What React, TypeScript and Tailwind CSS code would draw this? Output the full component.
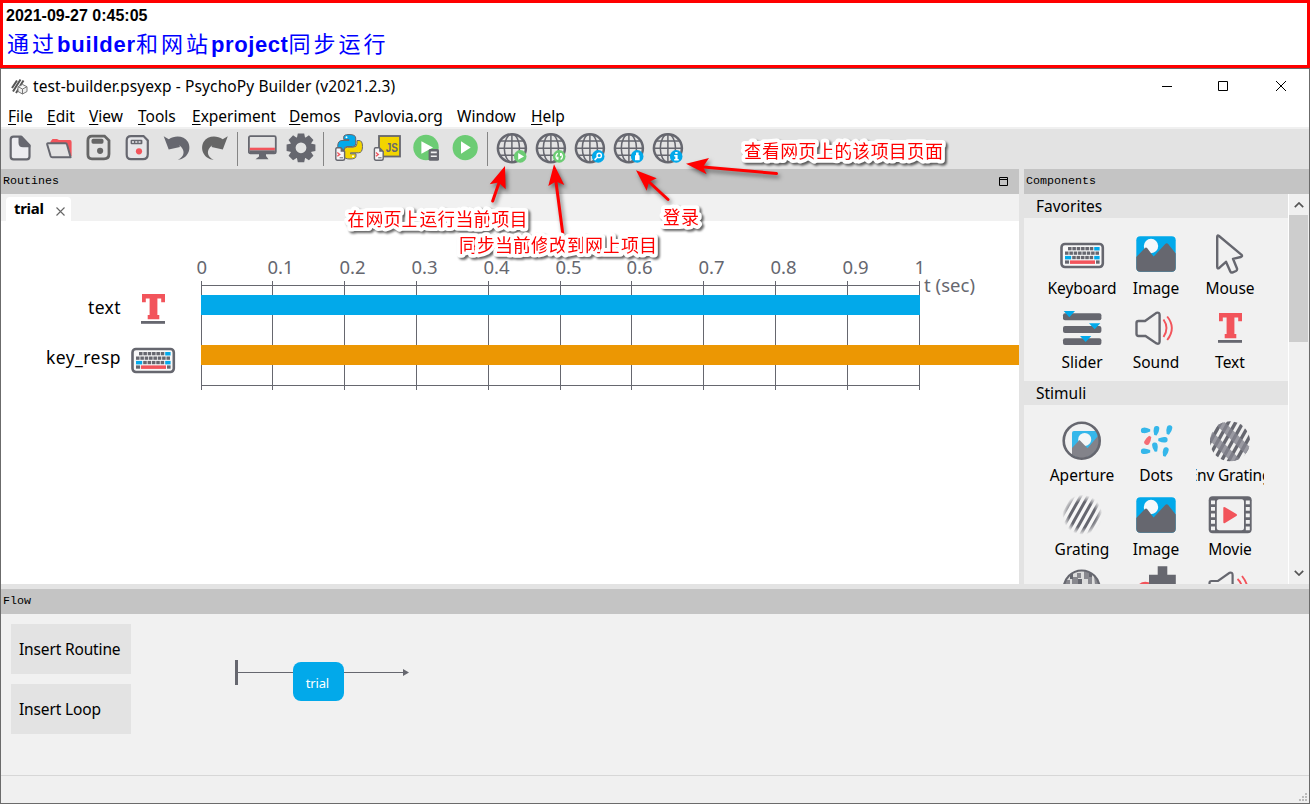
import React from "react";

const GREY = "#66676f";
const BLUE = "#02a9ea";
const RED = "#f2545b";
const GREEN = "#6ccc74";

function ToolIcon({ children }: { children: React.ReactNode }) {
  return (
    <svg viewBox="0 0 32 32" className="h-8 w-8 shrink-0 overflow-visible">
      {children}
    </svg>
  );
}

function ComponentIcon({ children }: { children: React.ReactNode }) {
  return (
    <svg viewBox="0 0 48 48" className="h-12 w-12 shrink-0">
      {children}
    </svg>
  );
}

const Separator = () => <div className="mr-2 ml-1.5 h-[34px] w-px bg-[#858585]" />;

const NewIcon = () => (
  <ToolIcon>
    <path d="M9.5 4.7H17L25.5 13.5V24.5Q25.5 27.3 22.7 27.3H9.5Q6.7 27.3 6.7 24.5V7.5Q6.7 4.7 9.5 4.7Z" fill="#ececf0" stroke={GREY} strokeWidth="2.2" />
    <path d="M14.5 4H18L26.4 13V15.2H19Q14.5 15.2 14.5 11Z" fill={GREY} />
  </ToolIcon>
);

const OpenIcon = () => (
  <ToolIcon>
    <path d="M7.5 11V9.5L9.5 7H14L16 8H27Q28.6 8 28.6 10V24H26L23 11Z" fill={RED} />
    <path d="M5 11.3H22.5Q23.7 11.3 24 12.5L27.6 25.2H9.3Q8 25.2 7.6 24L4.2 12.5Q4 11.3 5 11.3Z" fill="#e3e3e3" stroke={GREY} strokeWidth="2" strokeLinejoin="round" />
  </ToolIcon>
);

const SaveIcon = () => (
  <ToolIcon>
    <path d="M10 4.1H22.5L27 8.5V22Q27 26.8 22 26.8H10Q5.9 26.8 5.9 22.5V8.5Q5.9 4.1 10 4.1Z" fill="#e3e3e3" stroke="#666" strokeWidth="2.8" />
    <rect x="9.5" y="6.8" width="12" height="5" rx="1.7" fill="#666" />
    <circle cx="18.1" cy="18.8" r="3.1" fill="#666" />
  </ToolIcon>
);

const SaveAsIcon = () => (
  <ToolIcon>
    <path d="M10 4.1H22.5L26.8 8.5V22Q26.8 27.2 22 27.2H10Q5.7 27.2 5.7 22.5V8.5Q5.7 4.1 10 4.1Z" fill="#e6e6e9" stroke={GREY} strokeWidth="2.2" />
    <rect x="9.6" y="7.8" width="11.8" height="4.4" rx="1" fill={GREY} />
    <path d="M11 9h2v2h-2zM14.3 9h2v2h-2zM17.6 9h2v2h-2z" fill="#c9c9ce" />
    <circle cx="18" cy="19.3" r="3.1" fill={RED} />
  </ToolIcon>
);

const undoPath = "M3.700 4.200L8.800 7.200C15 3 24 3.500 28 10C32 18 27 27 17.800 27.800C25 24.500 25.500 18 19.200 13.200L20 15L8.700 17.600Z";

const UndoIcon = () => (
  <ToolIcon><path d={undoPath} fill={GREY} /></ToolIcon>
);

const RedoIcon = () => (
  <ToolIcon><path d={undoPath} transform="translate(32.5 0) scale(-1 1)" fill="#666" /></ToolIcon>
);

const MonitorIcon = () => (
  <ToolIcon>
    <rect x="2.9" y="4.2" width="26.9" height="17.2" rx="1.5" fill="#e3e3e3" stroke={GREY} strokeWidth="1.8" />
    <rect x="3.8" y="15.7" width="25.1" height="2.7" fill={RED} />
    <rect x="3.8" y="18.4" width="25.1" height="3.5" fill={GREY} />
    <path d="M13 22h7v2l2.5 3.2h-13L13 24.6z" fill={GREY} />
  </ToolIcon>
);

const GearIcon = () => (
  <ToolIcon>
    {[0, 45, 90, 135].map((a) => (
      <path key={a} d="M12.8 1.4h6.4l1 5h-8.4zM12.8 30.2h6.4l1-5h-8.4z" transform={`rotate(${a} 16 15.8)`} fill={GREY} />
    ))}
    <circle cx="16" cy="15.8" r="8.2" fill="none" stroke={GREY} strokeWidth="5.6" />
  </ToolIcon>
);

const ScriptSheet = ({ x = 3 }: { x?: number }) => (
  <g transform={`translate(${x} 15)`}>
    <path d="M2 .8H5.8L9.6 4.6V11.5Q9.6 13.3 7.8 13.3H2.4Q.8 13.3 .8 11.5V2.2Q.8 .8 2 .8Z" fill="#f4f4f6" stroke={GREY} strokeWidth="1.4" />
    <path d="M5.6 .8V4.8H9.6Z" fill={GREY} />
    <path d="M2.3 5.600L4.700 7.400L2.300 9.200" fill="none" stroke={RED} strokeWidth="1.300" />
    <path d="M4.600 10.800H8" stroke={GREY} strokeWidth="1" />
  </g>
);

const PythonIcon = () => (
  <ToolIcon>
    <path d="M11.7 5Q11.7 2.5 17 2.5Q23.7 2.5 23.7 6V12Q23.7 14.5 20.5 14.5H15Q12 14.5 12 18V20.8H9.5Q5.7 20.8 5.7 14.5Q5.7 8.5 10 8.5H17V7.5H11.7Z" fill={BLUE} stroke={GREY} strokeWidth="1" />
    <path d="M25 8.5H27Q30.5 8.5 30.5 14.5Q30.5 20.8 26.5 20.8H18.5V21.8H24V24.3Q24 27 18 27Q12.2 27 12.2 24V18.3Q12.2 15.2 15.3 15.2H21Q25 15.2 25 11.5Z" fill="#f3d500" stroke={GREY} strokeWidth="1" />
    <circle cx="14.5" cy="5.3" r="1" fill="#fff" />
    <circle cx="21" cy="24.2" r="1" fill="#fff" />
    <ScriptSheet />
  </ToolIcon>
);

const JsIcon = () => (
  <ToolIcon>
    <rect x="8" y="4" width="21" height="20.5" fill="#f3d500" stroke={GREY} strokeWidth="1.8" />
    <text x="14.800" y="20.300" textLength="12.200" lengthAdjust="spacingAndGlyphs" fill={GREY} className="font-['Liberation_Sans',sans-serif] text-[12.500px] font-bold">JS</text>
    <ScriptSheet x={2.6} />
  </ToolIcon>
);

const RunnerIcon = () => (
  <ToolIcon>
    <circle cx="16" cy="15.5" r="12.7" fill={GREEN} />
    <path d="M11.4 9.2L23 15.5L11.4 21.7Z" fill="#fff" />
    <rect x="18.6" y="17" width="10.4" height="11.8" rx="1.6" fill={GREY} />
    <path d="M20.8 20.4h6M20.8 24.2h6" stroke="#f1f1f1" strokeWidth="1.6" />
  </ToolIcon>
);

const RunIcon = () => (
  <ToolIcon>
    <circle cx="16.2" cy="15.7" r="12.6" fill={GREEN} />
    <path d="M12 9.2L21.7 15.5L12 21.8Z" fill="#fff" />
  </ToolIcon>
);

function GlobeIcon({ color, children }: { color: string; children: React.ReactNode }) {
  return (
    <ToolIcon>
      <g fill="none" stroke={GREY} strokeWidth="1.5">
        <circle cx="15.9" cy="16.2" r="14" strokeWidth="2.5" />
        <ellipse cx="15.9" cy="16.2" rx="7.6" ry="14" />
        <path d="M15.9 2.2V30.2M1.9 16.2H29.9M4.4 9.1H27.4M4.4 23.3H27.4" />
      </g>
      <circle cx="24.2" cy="24.4" r="6.3" fill={color} />
      {children}
    </ToolIcon>
  );
}

const Keys = ({ x, y, n, w }: { x: number; y: number; n: number; w: number }) => (
  <>
    {Array.from({ length: n }, (_, i) => (
      <rect key={i} x={x + i * w} y={y} width={w - 0.8} height="3.3" fill={GREY} />
    ))}
  </>
);

const KeyboardArt = () => (
  <>
    <rect x="3.5" y="14" width="41.3" height="23" rx="3.4" fill="#f8f8f8" stroke={GREY} strokeWidth="2.6" />
    <Keys x={10} y={17} n={6} w={4.35} />
    <rect x="36.2" y="17" width="5.4" height="3.5" fill={BLUE} />
    <Keys x={7} y={21.5} n={8} w={4.35} />
    <rect x="7" y="25.9" width="6.2" height="3.5" fill={BLUE} />
    <Keys x={14.2} y={25.9} n={5} w={4.35} />
    <rect x="36.2" y="25.9" width="5.4" height="3.5" fill={BLUE} />
    <Keys x={7} y={30.4} n={1} w={4.9} />
    <rect x="12" y="30.4" width="25" height="3.5" fill={RED} />
    <Keys x={38} y={30.4} n={1} w={4.4} />
  </>
);

const TextArt = () => (
  <>
    <path d="M13 9H36V17.2H32.2V13.6H28.4V30H30.3V34.3H18.7V30H20.6V13.6H16.8V17.2H13Z" fill={RED} />
    <rect x="12" y="36" width="24" height="2.8" fill={GREY} />
  </>
);

const ImageIcon = () => (
  <ComponentIcon>
    <rect x="4.3" y="6.3" width="39.4" height="35.4" rx="4" fill={BLUE} />
    <circle cx="19" cy="16" r="7.2" fill="#f4f8fb" />
    <path d="M4.3 27L12.7 18.2Q14 17 15.3 18.2L21.6 26.6L33.2 14Q34.8 12.6 36.2 14L43.7 23.6V37.7Q43.7 41.7 39.7 41.7H8.3Q4.3 41.7 4.3 37.7Z" fill={GREY} />
  </ComponentIcon>
);

const MouseIcon = () => (
  <ComponentIcon>
    <path d="M11.2 7Q11.2 4.6 13 6L35.3 24.6Q37 26.4 34.8 27L27 28.8L31 38.5Q31.4 40.2 30 41L26.8 42.4Q25 43 24.3 41.4L20 31.8L13.5 37.7Q11.2 39.4 11.2 36.8Z" fill="#f1f1f1" stroke={GREY} strokeWidth="2.4" strokeLinejoin="round" />
  </ComponentIcon>
);

const SliderIcon = () => (
  <ComponentIcon>
    {[9.3, 22, 34.2].map((y) => (
      <rect key={y} x="5" y={y} width="38.4" height="6.9" rx="2" fill={GREY} />
    ))}
    <path d="M5.7 7H17L11.3 13.2ZM31 19.2H42.3L36.7 25.3ZM22 32H33.3L27.7 38Z" fill={BLUE} />
  </ComponentIcon>
);

const hornPath = "M6.5 17H13L24.5 8.8Q27.6 8 27.6 11V37.5Q27.6 40.5 24.5 39.4L13.5 32H6.5Q4.5 32 4.5 30V19Q4.5 17 6.5 17Z";

const SoundIcon = () => (
  <ComponentIcon>
    <path d={hornPath} fill="#f1f1f1" stroke={GREY} strokeWidth="2.4" />
    <path d="M31.5 15.5Q37.5 24 31.5 33M35.2 12.5Q44.5 24 35.2 36" fill="none" stroke={RED} strokeWidth="1.9" />
  </ComponentIcon>
);

const ApertureIcon = () => (
  <ComponentIcon>
    <clipPath id="aperture"><circle cx="23.7" cy="23.7" r="17.2" /></clipPath>
    <g clipPath="url(#aperture)">
      <path d="M14 16Q14 14 16 14H42V40H14Z" fill="#35b7ea" />
      <circle cx="26.7" cy="22.4" r="6.5" fill="#f4f6f7" />
      <path d="M14 31L21.5 23L29.5 31.3L42 16.5V42H14Z" fill="#83838a" />
    </g>
    <circle cx="23.7" cy="23.7" r="18" fill="none" stroke={GREY} strokeWidth="2.6" />
  </ComponentIcon>
);

const drops = [
  [13.7, 13.4, -90, "#35b7ea"], [24.2, 13.8, 10, "#35b7ea"], [37, 13, 15, "#35b7ea"],
  [16, 23.3, 210, "#f56d74"], [30.8, 22.7, 90, "#35b7ea"], [23.2, 30.2, -10, "#35b7ea"],
  [13.7, 34.2, -90, "#35b7ea"], [33.4, 35, 15, "#35b7ea"],
] as const;

const DotsIcon = () => (
  <ComponentIcon>
    {drops.map(([x, y, r, c], i) => (
      <path key={i} d="M-1.2 4.500Q-3.200 0 -2.700 -2.300A2.700 2.500 0 0 1 2.700 -2.300Q3.200 0 1.200 4.500Z" transform={`translate(${x} ${y}) rotate(${r})`} fill={c} />
    ))}
  </ComponentIcon>
);

const Stripes = ({ gap, width }: { gap: number; width: number }) => (
  <>
    {Array.from({ length: 19 }, (_, i) => (
      <path key={i} d={`M${(i - 9) * gap + 12} 50L${(i - 9) * gap + 40} 0`} stroke={GREY} strokeWidth={width} />
    ))}
  </>
);

const EnvGratingIcon = () => (
  <ComponentIcon>
    <clipPath id="envelope"><circle cx="24" cy="24.3" r="20" /></clipPath>
    <g clipPath="url(#envelope)">
      <Stripes gap={7.3} width={3.4} />
      <path d="M-4 10L38 52M6 -2L58 50" stroke="#85858f" strokeWidth="8" opacity=".8" />
    </g>
  </ComponentIcon>
);

const GratingIcon = () => (
  <ComponentIcon>
    <radialGradient id="gauss"><stop offset=".65" stopColor="#fff" /><stop offset="1" stopColor="#fff" stopOpacity="0" /></radialGradient>
    <mask id="fade"><circle cx="24.3" cy="23.7" r="20" fill="url(#gauss)" /></mask>
    <g mask="url(#fade)">
      <rect width="48" height="48" fill="#f8f8f8" />
      <Stripes gap={7.2} width={3} />
    </g>
  </ComponentIcon>
);

const MovieIcon = () => (
  <ComponentIcon>
    <rect x="2.7" y="5.3" width="43" height="37" rx="4" fill={GREY} />
    <rect x="10.8" y="8.3" width="27.2" height="31" rx="2.5" fill="#f1f1f1" />
    {[9.5, 16, 22.5, 29, 35.5].map((y) => (
      <path key={y} d={`M5 ${y}h4v3.8h-4zM39.8 ${y}h4v3.8h-4z`} fill="#f1f1f1" />
    ))}
    <path d="M17.3 17Q17.3 15.4 19 16.2L30.4 23Q31.6 24 30.4 25L19 32Q17.3 32.8 17.3 31Z" fill={RED} />
  </ComponentIcon>
);

const NoiseIcon = () => (
  <ComponentIcon>
    <clipPath id="noise"><circle cx="23.7" cy="23.5" r="17.5" /></clipPath>
    <g clipPath="url(#noise)">
      <rect width="48" height="48" fill="#ddd" />
      <path d="M14 12h5v-4h4v5h-3v7h-6zM26 6h5v5h3v8h-4v-5h-4zM7 15h5v5h-5zM36 11h5v9h-4z" fill="#88888e" />
      <path d="M20 14h4v6h-4zM12 9h3v5h-3zM31 8h3v4h-3z" fill={GREY} />
    </g>
    <circle cx="23.7" cy="23.5" r="18" fill="none" stroke={GREY} strokeWidth="2.2" />
  </ComponentIcon>
);

const PolygonIcon = () => (
  <ComponentIcon>
    <circle cx="13.3" cy="26" r="9.3" fill={RED} />
    <path d="M25.7 1.2H35.3V9.8H43.8V24H17V9.8H25.7Z" fill={GREY} />
  </ComponentIcon>
);

const SmallSoundIcon = () => (
  <ComponentIcon>
    <path d={hornPath} transform="translate(-1 -1)" fill="#f1f1f1" stroke={GREY} strokeWidth="2.2" />
    <path d="M31.5 14Q35 17 36 22M36 11Q40 16 41.5 22" fill="none" stroke={RED} strokeWidth="1.9" />
  </ComponentIcon>
);

function Cell({ icon, label, clip }: { icon: React.ReactNode; label?: string; clip?: boolean }) {
  return (
    <div className="flex h-[74px] w-[74px] flex-col items-center">
      {icon}
      <div className={`flex h-[21px] items-center justify-center whitespace-nowrap ${clip ? "w-[68px] overflow-hidden tracking-[-0.2px]" : ""}`}>
        {label}
      </div>
    </div>
  );
}

const PaneTitle = ({ children }: { children: React.ReactNode }) => (
  <div className="flex h-[25px] shrink-0 items-center justify-between bg-[#c4c4c4] pr-[11px] pl-[2px] font-['Liberation_Mono',monospace] text-[11.67px] leading-none">
    {children}
  </div>
);

const menus = [
  ["F", "ile", "w-[39px]"], ["E", "dit", "w-[42px]"], ["V", "iew", "w-[49px]"], ["T", "ools", "w-[54px]"],
  ["E", "xperiment", "w-[97px]"], ["D", "emos", "w-[65px]"], ["", "Pavlovia.org", "w-[103px]"], ["", "Window", "w-[74px]"], ["H", "elp", "w-[50px]"],
];

const ticks = [201, 272, 344, 416, 488, 560, 631, 703, 775, 847, 919];

function Timeline() {
  return (
    <svg viewBox="1 221 1018 363" className="block h-[363px] w-[1018px] bg-white">
      <g fill={GREY} className="text-[18.5px]">
        {ticks.map((x, i) => (
          <text key={x} x={x - 4.5} y="274" textLength={i === 0 || i === 10 ? 10.5 : 26}>{i === 10 ? "1" : i === 0 ? "0" : `0.${i}`}</text>
        ))}
        <text x="924" y="292" textLength="51">t (sec)</text>
      </g>
      <g className="text-[17.5px]">
        <text x="88" y="313.5" textLength="32.5">text</text>
        <text x="46" y="363.5" textLength="74.5">key_resp</text>
      </g>
      <g transform="translate(129 285)"><TextArt /></g>
      <g transform="translate(129 335)"><KeyboardArt /></g>
      {ticks.map((x) => <rect key={x} x={x} y="281" width="1" height="109" fill={GREY} />)}
      <rect x="201" y="285" width="719" height="1" fill={GREY} />
      <rect x="201" y="385" width="719" height="1" fill={GREY} />
      <rect x="201" y="295" width="719" height="20" fill={BLUE} />
      <rect x="201" y="345" width="818" height="20" fill="#ec9703" />
    </svg>
  );
}

const notes = [
  { x: 347.5, y: 226, w: 180, text: "在网页上运行当前项目" },
  { x: 459, y: 252, w: 198, text: "同步当前修改到网上项目" },
  { x: 663, y: 224, w: 36, text: "登录" },
  { x: 744, y: 158, w: 199, text: "查看网页上的该项目页面" },
];

function Annotations() {
  return (
    <svg viewBox="0 0 1310 804" className="pointer-events-none absolute inset-0 h-[804px] w-[1310px]">
      <g className="[filter:drop-shadow(2px_3px_2px_rgba(0,0,0,0.5))]" fill="#f00" stroke="#f00" strokeLinecap="round">
        <path d="M492.7 201L500 180M562.7 233L556 182M668 199.5L648 181M776.5 173.5L703 167" strokeWidth="3" />
        <path stroke="none" d="M505 166L489.7 184.3L498.5 182.5L505.7 189.3ZM554 164.3L548.3 186L556 181.5L564.3 185ZM636 170.3L646.7 190.7L649 182L656.7 178.3ZM686 163.7L706.7 174.3L703 167L709 158Z" />
      </g>
      {notes.map((n) => (
        <text key={n.text} x={n.x} y={n.y} textLength={n.w} fill="#f00" stroke="#fff" strokeWidth="7.5" strokeLinejoin="round" paintOrder="stroke" className="font-['Liberation_Serif','Noto_Sans_CJK_SC',serif] text-[18px] [filter:drop-shadow(2px_2px_1px_rgba(0,0,0,0.6))]">{n.text}</text>
      ))}
    </svg>
  );
}

export default function App() {
  return (
    <div className="relative flex h-[804px] w-[1310px] flex-col overflow-hidden bg-white font-['Noto_Sans','Noto_Sans_CJK_SC',sans-serif] text-[15.5px] leading-none text-black">
      <header className="h-[68px] shrink-0 border-[3px] border-[#f00] bg-white pt-1 pl-[3px]">
        <div className="font-['Liberation_Sans',sans-serif] text-base leading-[18px] font-bold">2021-09-27 0:45:05</div>
        <div className="mt-[5px] ml-px flex h-[30px] items-center font-['Liberation_Sans','Noto_Sans_CJK_SC',sans-serif] text-[22px] leading-[30px] text-[#00f]">
          <span className="tracking-[3px]">通过</span>
          <b className="tracking-[0.8px]">builder</b>
          <span className="tracking-[3px]">和网站</span>
          <b className="tracking-[0.6px]">project</b>
          <span className="tracking-[3px]">同步运行</span>
        </div>
      </header>

      <main className="flex min-h-0 flex-1 flex-col border border-[#6b6b6b] bg-[#e3e3e3]">
        <div className="flex h-[34px] shrink-0 items-center bg-white pl-[10px]">
          <svg viewBox="0 0 17 17" className="h-[17px] w-[17px]">
            <path d="M1 10L6 2.5M2 13.5L9.5 1.5M5 15L8.5 9.5M9 8L12.5 2.5" stroke="#555" strokeWidth="2" />
            <path d="M11.5 6.5L16 8.7V13.5L11.5 16L7 13.5V8.7ZM7 8.7L11.5 11L16 8.700M11.500 11V16" fill="#eee" stroke="#777" strokeWidth="1" />
          </svg>
          <span className="mt-[2px] ml-[5px] tracking-[0.1px]">test-builder.psyexp - PsychoPy Builder (v2021.2.3)</span>
          <svg viewBox="0 0 130 12" className="mr-[21px] ml-auto h-3 w-[130px]" fill="none" stroke="#000">
            <path d="M4 6.500H14M60.500 1.500H69.500V10.500H60.500ZM118 1L128 11M128 1L118 11" />
          </svg>
        </div>

        <nav className="flex h-6 shrink-0 items-center bg-white pt-[3px] pl-[7px]">
          {menus.map(([key, rest, width], i) => (
            <div key={i} className={`${width} shrink-0 whitespace-nowrap`}>
              <span className="underline decoration-1 underline-offset-2">{key}</span>{rest}
            </div>
          ))}
        </nav>
        <div className="h-[2px] shrink-0 bg-[#f0f0f0]" />

        <div className="flex h-10 shrink-0 items-start pt-[3px] pl-[3px]">
          <div className="flex gap-[7px]"><NewIcon /><OpenIcon /><SaveIcon /><SaveAsIcon /><UndoIcon /><RedoIcon /></div>
          <Separator />
          <div className="flex gap-[7px]"><MonitorIcon /><GearIcon /></div>
          <Separator />
          <div className="flex gap-[7px]"><PythonIcon /><JsIcon /><RunnerIcon /><RunIcon /></div>
          <Separator />
          <div className="flex gap-[7px]">
            <GlobeIcon color={GREEN}><path d="M22.2 21L28 24.4L22.2 27.8Z" fill="#fff" /></GlobeIcon>
            <GlobeIcon color={GREEN}><path d="M22.8 21.3Q19.3 24 22.5 27.5M22.8 27.8V24.8M25.6 27.5Q29.1 24.8 25.9 21.3M25.6 21V24" fill="none" stroke="#fff" strokeWidth="1.3" /></GlobeIcon>
            <GlobeIcon color={BLUE}><circle cx="25.2" cy="23.4" r="2.2" fill="none" stroke="#fff" strokeWidth="1.4" /><path d="M23.6 25L20.6 27.8" stroke="#fff" strokeWidth="1.6" /></GlobeIcon>
            <GlobeIcon color={BLUE}><path d="M22 28.2V24Q22 23 23 23V20.5H25.6V23Q26.6 23 26.6 24V28.2Z" fill="#fff" /></GlobeIcon>
            <GlobeIcon color={BLUE}><path d="M23.2 20H25.6V21.8H23.2ZM22.2 23H25.6V27H26.7V28.5H22.2V27H23.3V24.5H22.2Z" fill="#fff" /></GlobeIcon>
          </div>
        </div>

        <div className="flex h-[415px] shrink-0">
          <section className="flex w-[1018px] flex-col">
            <PaneTitle>
              <span>Routines</span>
              <svg viewBox="0 0 9 9" className="h-[9px] w-[9px]"><path d="M.5 .5H8.5V8.5H.5ZM0 2.5H9" fill="none" stroke="#000" /></svg>
            </PaneTitle>
            <div className="flex h-[27px] shrink-0 items-end bg-[#f1f1f1] pl-[5px]">
              <div className="flex h-6 w-[65px] items-center rounded-t bg-white pl-2">
                <b className="-mt-px text-[15px] tracking-[-0.3px]">trial</b>
                <svg viewBox="0 0 9 9" className="mt-1 mr-[6px] ml-auto h-[9px] w-[9px]"><path d="M.5 .5L8.5 8.5M8.5 .5L.5 8.5" stroke="#666" strokeWidth="1.1" /></svg>
              </div>
            </div>
            <Timeline />
          </section>

          <section className="ml-[5px] flex w-[285px] flex-col">
            <PaneTitle><span>Components</span></PaneTitle>
            <div className="flex min-h-0 flex-1">
              <div className="flex w-[264px] flex-col overflow-hidden bg-[#f1f1f1]">
                <div className="flex h-6 shrink-0 items-center bg-[#e3e3e3] pt-[2px] pl-3">Favorites</div>
                <div className="grid h-[163px] shrink-0 grid-cols-[74px_74px_74px] content-start pt-3 pl-[21px]">
                  <Cell icon={<ComponentIcon><KeyboardArt /></ComponentIcon>} label="Keyboard" />
                  <Cell icon={<ImageIcon />} label="Image" />
                  <Cell icon={<MouseIcon />} label="Mouse" />
                  <Cell icon={<SliderIcon />} label="Slider" />
                  <Cell icon={<SoundIcon />} label="Sound" />
                  <Cell icon={<ComponentIcon><TextArt /></ComponentIcon>} label="Text" />
                </div>
                <div className="flex h-6 shrink-0 items-center bg-[#e3e3e3] pt-[2px] pl-3">Stimuli</div>
                <div className="grid shrink-0 grid-cols-[74px_74px_74px] pt-3 pl-[21px]">
                  <Cell icon={<ApertureIcon />} label="Aperture" />
                  <Cell icon={<DotsIcon />} label="Dots" />
                  <Cell icon={<EnvGratingIcon />} label="Env Grating" clip />
                  <Cell icon={<GratingIcon />} label="Grating" />
                  <Cell icon={<ImageIcon />} label="Image" />
                  <Cell icon={<MovieIcon />} label="Movie" />
                  <Cell icon={<NoiseIcon />} />
                  <Cell icon={<PolygonIcon />} />
                  <Cell icon={<SmallSoundIcon />} />
                </div>
              </div>
              <div className="flex w-[21px] flex-col items-center border-l border-white bg-[#f0f0f0]">
                <svg viewBox="0 0 10 6" className="mt-2 mr-px h-[6px] w-[10px]"><path d="M.8 5.2L5 1L9.2 5.2" fill="none" stroke="#555" strokeWidth="1.7" /></svg>
                <div className="mt-[7px] mr-px h-[127px] w-[19px] bg-[#cdcdcd]" />
                <svg viewBox="0 0 10 6" className="mt-auto mr-px mb-2 h-[6px] w-[10px]"><path d="M.8 .8L5 5L9.2 .8" fill="none" stroke="#555" strokeWidth="1.7" /></svg>
              </div>
            </div>
          </section>
        </div>

        <section className="mt-[5px] flex h-[186px] shrink-0 flex-col bg-[#f1f1f1]">
          <PaneTitle><span>Flow</span></PaneTitle>
          <div className="flex flex-1 pt-[10px] pl-[10px]">
            <div className="flex flex-col gap-[10px] tracking-[-0.15px]">
              <button className="h-[50px] w-[120px] bg-[#e3e3e3] pt-[2px] pl-2 text-left whitespace-nowrap">Insert Routine</button>
              <button className="h-[50px] w-[120px] bg-[#e3e3e3] pt-[2px] pl-2 text-left">Insert Loop</button>
            </div>
            <svg viewBox="0 0 180 50" className="mt-[30px] ml-[104px] h-[50px] w-[180px]">
              <rect y="6" width="3" height="25" fill={GREY} />
              <rect x="3" y="18" width="167" height="1" fill={GREY} />
              <path d="M168 15L174 18.5L168 22Z" fill={GREY} />
              <rect x="58" y="8" width="51" height="39" rx="8" fill={BLUE} />
              <text x="70.7" y="34" textLength="23.5" fill="#fff" className="text-[13px]">trial</text>
            </svg>
          </div>
        </section>
        <footer className="flex flex-1 items-end justify-end border-t border-[#d7d7d7] bg-[#f0f0f0]">
          <svg viewBox="0 0 12 12" className="h-3 w-3"><path d="M8 2h2v2h-2zM5 5h2v2h-2zM8 5h2v2h-2zM2 8h2v2h-2zM5 8h2v2h-2zM8 8h2v2h-2z" fill="#bbb" /></svg>
        </footer>
      </main>
      <Annotations />
    </div>
  );
}
